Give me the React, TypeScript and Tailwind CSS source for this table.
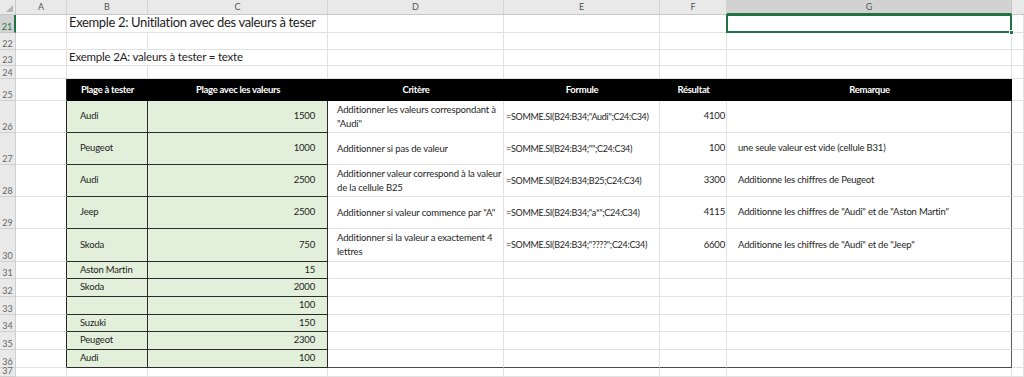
import type { ReactNode } from 'react';

type DataRow = {
  n: number;
  b?: string;
  c?: string;
  d?: string[];
  e?: string;
  f?: string;
  g?: string;
};

const dataRows: DataRow[] = [
  { n: 26, b: 'Audi', c: '1500', d: ['Additionner les valeurs correspondant à', '"Audi"'], e: '=SOMME.SI(B24:B34;"Audi";C24:C34)', f: '4100' },
  { n: 27, b: 'Peugeot', c: '1000', d: ['Additionner si pas de valeur'], e: '=SOMME.SI(B24:B34;"";C24:C34)', f: '100', g: 'une seule valeur est vide (cellule B31)' },
  { n: 28, b: 'Audi', c: '2500', d: ['Additionner valeur correspond à la valeur', 'de la cellule B25'], e: '=SOMME.SI(B24:B34;B25;C24:C34)', f: '3300', g: 'Additionne les chiffres de Peugeot' },
  { n: 29, b: 'Jeep', c: '2500', d: ['Additionner si valeur commence par "A"'], e: '=SOMME.SI(B24:B34;"a*";C24:C34)', f: '4115', g: 'Additionne les chiffres de "Audi" et de "Aston Martin"' },
  { n: 30, b: 'Skoda', c: '750', d: ['Additionner si la valeur a exactement 4', 'lettres'], e: '=SOMME.SI(B24:B34;"????";C24:C34)', f: '6600', g: 'Additionne les chiffres de "Audi" et de "Jeep"' },
  { n: 31, b: 'Aston Martin', c: '15' },
  { n: 32, b: 'Skoda', c: '2000' },
  { n: 33, c: '100' },
  { n: 34, b: 'Suzuki', c: '150' },
  { n: 35, b: 'Peugeot', c: '2300' },
  { n: 36, b: 'Audi', c: '100' },
];

const headers = ['Plage à tester', 'Plage avec les valeurs', 'Critère', 'Formule', 'Résultat', 'Remarque'];

function Cell({ className = '', children }: { className?: string; children?: ReactNode }) {
  return (
    <div className={`border-r border-b border-[#e1e1e1] overflow-hidden whitespace-nowrap ${className}`}>
      {children}
    </div>
  );
}

function RowHead({ n, active }: { n: number; active?: boolean }) {
  return (
    <div
      className={`flex items-end justify-center pb-px text-[9px] leading-none border-b ${
        active
          ? 'bg-[#d2d2d2] text-[#217346] border-r-2 border-r-[#217346] border-b-[#c4c4c4]'
          : 'bg-[#e9e9e9] text-[#666] border-r border-[#d0d0d0]'
      }`}
    >
      {n}
    </div>
  );
}

function BlankRow({ n }: { n: number }) {
  return (
    <>
      <RowHead n={n} />
      {Array.from({ length: 8 }).map((_, i) => (
        <Cell key={i} />
      ))}
    </>
  );
}

export default function App() {
  return (
    <div className="w-[1024px] h-[377px] overflow-hidden bg-white font-['Lato',sans-serif] text-[#1e1e1e]">
      <div className="grid grid-cols-[16px_51px_81px_180px_176px_156px_67px_285px_1fr] grid-rows-[15px_18px_17px_16px_13px_22px_32px_32px_32px_32px_33px_17px_18px_18px_17px_18px_18px_9px]">
        {/* column headers */}
        <div className="relative bg-[#e9e9e9] border-r border-b border-[#c8c8c8]">
          <svg className="absolute right-[2px] bottom-[2px]" width="7" height="7" viewBox="0 0 7 7">
            <path d="M7 0V7H0Z" fill="#b4b4b4" />
          </svg>
        </div>
        {['A', 'B', 'C', 'D', 'E', 'F'].map((l) => (
          <div key={l} className="flex items-center justify-center bg-[#e9e9e9] border-r border-r-[#d4d4d4] border-b border-b-[#c8c8c8] text-[9px] text-[#555]">
            {l}
          </div>
        ))}
        <div className="flex items-center justify-center bg-[#d2d2d2] border-r border-r-[#c4c4c4] border-b-2 border-b-[#217346] text-[9px] text-[#555]">
          G
        </div>
        <div className="bg-[#e9e9e9] border-b border-[#c8c8c8]" />

        {/* row 21 */}
        <RowHead n={21} active />
        <Cell />
        <Cell className="col-span-2 flex items-end pl-[2px] pb-[2px] text-[13px] leading-[15px] tracking-[-0.35px]">
          Exemple 2: Unitilation avec des valeurs à teser
        </Cell>
        <Cell />
        <Cell />
        <Cell />
        <div className="relative border-r border-b border-[#e1e1e1]">
          <div className="absolute -left-px -top-px -right-px -bottom-px border-2 border-[#217346]" />
          <div className="absolute -right-[3px] -bottom-[3px] w-[5px] h-[5px] bg-[#217346] border border-white" />
        </div>
        <Cell />

        <BlankRow n={22} />

        {/* row 23 */}
        <RowHead n={23} />
        <Cell />
        <Cell className="col-span-2 flex items-end pl-[2px] pb-px text-[11.5px] leading-[14px] tracking-[-0.2px]">
          Exemple 2A: valeurs à tester = texte
        </Cell>
        <Cell />
        <Cell />
        <Cell />
        <Cell />
        <Cell />

        <BlankRow n={24} />

        {/* row 25: table header */}
        <RowHead n={25} />
        <Cell className="border-r-[#222]" />
        {headers.map((h) => (
          <div key={h} className="flex items-center justify-center bg-black text-white font-bold text-[9.5px] tracking-[-0.3px] whitespace-nowrap">
            {h}
          </div>
        ))}
        <Cell />

        {dataRows.map((r) => {
          const last = r.n === 36;
          const bottom = last ? 'border-b-[#4a4a4a]' : '';
          return (
            <div key={r.n} className="contents">
              <RowHead n={r.n} />
              <Cell className="border-r-[#222]" />
              <div className="flex items-center pl-[13px] bg-[#e2efda] border-r border-b border-[#2a2a2a] text-[9.5px] tracking-[-0.2px] whitespace-nowrap overflow-hidden">
                {r.b}
              </div>
              <div className="flex items-center justify-end pr-[12px] bg-[#e2efda] border-r border-b border-[#2a2a2a] text-[9.5px] tracking-[-0.2px]">
                {r.c}
              </div>
              <Cell className={`flex flex-col justify-center pl-[9px] text-[9.5px] tracking-[-0.15px] leading-[14px] ${bottom}`}>
                {r.d?.map((line) => (
                  <span key={line}>{line}</span>
                ))}
              </Cell>
              <Cell className={`flex items-center pl-[2px] text-[9px] tracking-[-0.3px] ${bottom}`}>{r.e}</Cell>
              <Cell className={`flex items-center justify-end pr-px text-[9.5px] tracking-[-0.2px] ${bottom}`}>{r.f}</Cell>
              <Cell className={`flex items-center pl-[11px] text-[9.5px] tracking-[-0.2px] border-r-[#5a5a5a] ${bottom}`}>{r.g}</Cell>
              <Cell />
            </div>
          );
        })}

        <BlankRow n={37} />
      </div>
    </div>
  );
}
